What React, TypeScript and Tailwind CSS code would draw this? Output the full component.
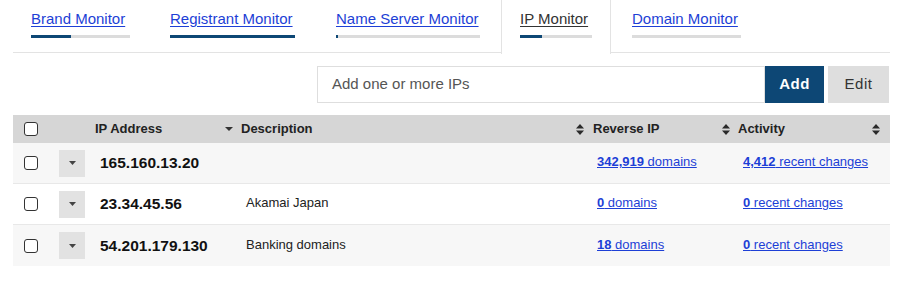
import React from "react";

const tabs = [
  { label: "Brand Monitor", bar: 99, fill: 40, pl: "pl-[18px]", pr: "pr-[22px]", active: false },
  { label: "Registrant Monitor", bar: 125, fill: 125, pl: "pl-[18px]", pr: "pr-[22px]", active: false },
  { label: "Name Server Monitor", bar: 144, fill: 2, pl: "pl-[19px]", pr: "pr-[21px]", active: false },
  { label: "IP Monitor", bar: 72, fill: 22, pl: "pl-[18px]", pr: "pr-[18px]", active: true },
  { label: "Domain Monitor", bar: 109, fill: 0, pl: "pl-[21px]", pr: "pr-[18px]", active: false },
];

const rows = [
  { ip: "165.160.13.20", desc: "", rev: "342,919", act: "4,412", bg: "bg-[#f7f7f7]" },
  { ip: "23.34.45.56", desc: "Akamai Japan", rev: "0", act: "0", bg: "bg-white" },
  { ip: "54.201.179.130", desc: "Banking domains", rev: "18", act: "0", bg: "bg-[#f7f7f7]" },
];

function Checkbox() {
  return <div className="w-[14px] h-[14px] rounded-[3px] border-[1.5px] border-[#333] bg-white" />;
}

function SortIcon() {
  return (
    <svg width="8" height="11" viewBox="0 0 8 11" className="shrink-0">
      <polygon points="0,4.5 8,4.5 4,0" fill="#2a2a2a" />
      <polygon points="0,6.5 8,6.5 4,11" fill="#2a2a2a" />
    </svg>
  );
}

function Caret({ w = 8, h = 4, color = "#333" }: { w?: number; h?: number; color?: string }) {
  return (
    <svg width={w} height={h} viewBox={`0 0 ${w} ${h}`} className="shrink-0">
      <polygon points={`0,0 ${w},0 ${w / 2},${h}`} fill={color} />
    </svg>
  );
}

export default function App() {
  return (
    <div className="w-[899px] h-[294px] bg-white font-['Liberation_Sans',Arial,sans-serif] text-[#222]">
      <div className="pl-[13px] pr-[9px]">
        {/* Tabs */}
        <div className="flex h-[53px] border-b border-[#e3e3e3]">
          {tabs.map((t) => (
            <div
              key={t.label}
              className={`${t.pl} ${t.pr} pt-[10px] h-[53px] ${
                t.active ? "border-l border-r border-[#e3e3e3] bg-white h-[54px] -mb-px" : ""
              }`}
            >
              <div
                className={`text-[15px] leading-[18px] underline underline-offset-[2px] whitespace-nowrap ${
                  t.active ? "text-[#333]" : "text-[#1d3fd6]"
                }`}
              >
                {t.label}
              </div>
              <div className="mt-[7px] h-[3px] bg-[#dcdcdc]" style={{ width: t.bar }}>
                <div className="h-[3px] bg-[#0d4775]" style={{ width: t.fill }} />
              </div>
            </div>
          ))}
        </div>

        {/* Input row */}
        <div className="flex justify-end mt-[13px] pr-[1px]">
          <div className="w-[448px] h-[37px] border-[1.5px] border-[#dedede] flex items-center pl-[14px] text-[15px] text-[#555]">
            Add one or more IPs
          </div>
          <div className="w-[59px] h-[37px] bg-[#0d4775] text-white font-bold text-[15px] flex items-center justify-center tracking-[0.5px]">
            Add
          </div>
          <div className="w-[61px] h-[37px] ml-[4px] bg-[#dedede] text-[#333] text-[15px] flex items-center justify-center tracking-[0.5px]">
            Edit
          </div>
        </div>

        {/* Table */}
        <div className="mt-[12px]">
          <div className="flex items-center h-[28px] bg-[#d6d6d6] font-bold text-[13px] text-[#222]">
            <div className="w-[46px] pl-[11px]">
              <Checkbox />
            </div>
            <div className="w-[36px]" />
            <div className="w-[130px]">IP Address</div>
            <div className="w-[351px] flex items-center gap-[8px]">
              <Caret w={8} h={4} />
              <span>Description</span>
            </div>
            <div className="w-[146px] flex items-center gap-[9px]">
              <SortIcon />
              <span>Reverse IP</span>
            </div>
            <div className="flex-1 flex items-center gap-[8px] pr-[10px]">
              <SortIcon />
              <span className="flex-1">Activity</span>
              <SortIcon />
            </div>
          </div>

          {rows.map((r, i) => (
            <div
              key={r.ip}
              className={`flex items-center h-[41px] ${r.bg} ${i < rows.length - 1 ? "border-b border-[#e8e8e8]" : ""}`}
            >
              <div className="w-[46px] pl-[11px]">
                <Checkbox />
              </div>
              <div className="w-[41px]">
                <div className="w-[26px] h-[27px] bg-[#e2e2e2] flex items-center justify-center">
                  <Caret w={7} h={4} color="#444" />
                </div>
              </div>
              <div className="w-[146px] font-bold text-[15.5px] text-[#111]">{r.ip}</div>
              <div className="w-[351px] text-[13px] text-[#222] pb-[2px]">{r.desc}</div>
              <div className="w-[146px] text-[13px] pb-[2px]">
                <a className="text-[#1d3fd6] underline underline-offset-[1px] whitespace-nowrap">
                  <span className="font-bold">{r.rev}</span> domains
                </a>
              </div>
              <div className="flex-1 text-[13px] pb-[2px]">
                <a className="text-[#1d3fd6] underline underline-offset-[1px] whitespace-nowrap">
                  <span className="font-bold">{r.act}</span> recent changes
                </a>
              </div>
            </div>
          ))}
        </div>
      </div>
    </div>
  );
}
